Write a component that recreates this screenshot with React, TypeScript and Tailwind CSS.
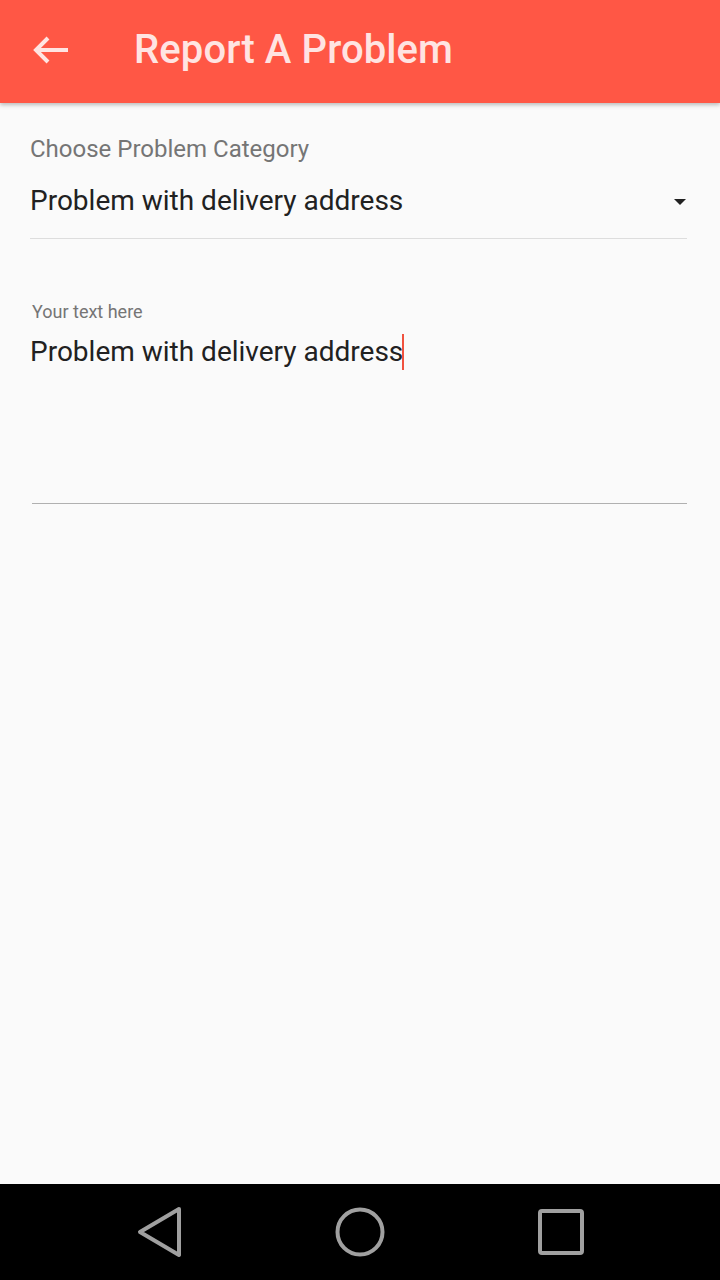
import { useState } from "react"

export default function App() {
  const [category] = useState("Problem with delivery address")
  const [text] = useState("Problem with delivery address")

  return (
    <div className="flex h-[1280px] w-[720px] flex-col bg-[#fafafa] font-['Roboto',sans-serif]">
      {/* App bar */}
      <header className="relative z-10 flex h-[103px] shrink-0 items-center bg-[#ff5745] pb-[4px] shadow-[0_2px_4px_rgba(0,0,0,0.25)]">
        <button className="ml-[30px] flex h-[40px] w-[40px] items-center justify-center">
          <svg width="40" height="40" viewBox="0 0 40 40" fill="none" stroke="#ffe4e2" strokeWidth="4" strokeLinecap="butt">
            <path d="M38 20H6" />
            <path d="M18 8L6 20l12 12" strokeLinejoin="miter" />
          </svg>
        </button>
        <h1 className="ml-[64px] text-[40px] font-medium tracking-[0.1px] text-[#ffe4e2]">Report A Problem</h1>
      </header>

      {/* Form */}
      <main className="flex-1 pl-[30px] pr-[33px] pt-[30px]">
        <div className="border-b border-[#dddddd] pb-[18px]">
          <p className="text-[24px] leading-[32px] text-[#757575]">Choose Problem Category</p>
          <div className="mt-[17px] flex items-center justify-between">
            <span className="text-[28px] leading-[38px] text-[#212121]">{category}</span>
            <svg width="14" height="8" viewBox="0 0 14 8" className="mt-[2px]">
              <path d="M1 1h12L7 7z" fill="#212121" />
            </svg>
          </div>
        </div>

        <div className="ml-[2px] mt-[61px] h-[204px] border-b-[1.5px] border-[#b0b0b0]">
          <p className="text-[18px] leading-[24px] text-[#757575]">Your text here</p>
          <div className="mt-[9px] flex items-center">
            <span className="-ml-[2px] text-[28px] leading-[38px] text-[#212121]">{text}</span>
            <span className="-ml-[1px] h-[36px] w-[2px] bg-[#f0523f]" />
          </div>
        </div>
      </main>

      {/* Android nav bar */}
      <nav className="flex h-[96px] shrink-0 items-center justify-center gap-[151px] bg-black">
        <svg width="48" height="52" viewBox="0 0 48 52" fill="none" stroke="#a0a0a0" strokeWidth="4" strokeLinejoin="round">
          <path d="M44 3L5 26l39 23z" />
        </svg>
        <svg width="52" height="52" viewBox="0 0 52 52" fill="none" stroke="#a0a0a0" strokeWidth="4">
          <circle cx="26" cy="26" r="22.5" />
        </svg>
        <svg width="48" height="48" viewBox="0 0 48 48" fill="none" stroke="#a0a0a0" strokeWidth="4">
          <rect x="3" y="3" width="42" height="42" rx="2" />
        </svg>
      </nav>
    </div>
  )
}
